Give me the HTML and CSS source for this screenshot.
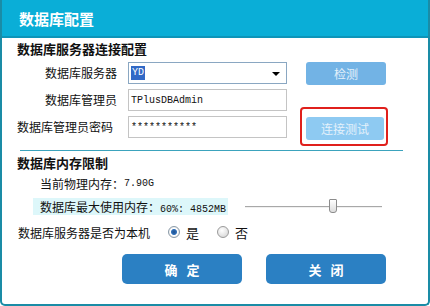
FILE: index.html
```html
<!DOCTYPE html>
<html lang="zh-CN">
<head>
<meta charset="utf-8">
<title>数据库配置</title>
<link rel="stylesheet" href="styles.css">
</head>
<body>
<div class="window">
  <div class="titlebar">数据库配置</div>
  <div class="content">
    <div class="section-title">数据库服务器连接配置</div>
    <div class="form-grid">
      <div class="label">数据库服务器</div>
      <div class="select"><span class="sel-text">YD</span><span class="arrow"></span></div>
      <button class="btn-light">检测</button>

      <div class="label">数据库管理员</div>
      <div class="input"><span class="mono">TPlusDBAdmin</span></div>
      <div></div>

      <div class="label label-long">数据库管理员密码</div>
      <div class="input"><span class="mono">***********</span></div>
      <button class="btn-light btn-test">连接测试</button>
    </div>
    <div class="divider"></div>
    <div class="section-title section-two">数据库内存限制</div>
    <div class="mem-row">当前物理内存：<span class="mono">7.90G</span></div>
    <div class="mem-row">
      <span class="mem-hl">数据库最大使用内存：<span class="mono">60%: 4852MB</span></span>
      <div class="slider"><div class="track"></div><div class="thumb"></div></div>
    </div>
    <div class="radio-row">
      <span>数据库服务器是否为本机</span>
      <span class="radio checked"></span><span class="radio-text">是</span>
      <span class="radio"></span><span class="radio-text">否</span>
    </div>
    <div class="actions">
      <button class="btn-dark">确&nbsp;&nbsp;&nbsp;定</button>
      <button class="btn-dark">关&nbsp;&nbsp;&nbsp;闭</button>
    </div>
  </div>
</div>
</body>
</html>
```

FILE: styles.css
```css
html, body {
  margin: 0;
  padding: 0;
  background: #ffffff;
}
body {
  width: 430px;
  height: 306px;
  font-family: "Noto Sans CJK SC", "DejaVu Sans", sans-serif;
  font-size: 12px;
  color: #111;
}
.window {
  box-sizing: border-box;
  width: 430px;
  height: 306px;
  border: 2px solid #1a8ca6;
  border-top: none;
  border-radius: 0 0 5px 5px;
  display: flex;
  flex-direction: column;
  overflow: hidden;
}
.titlebar {
  height: 36px;
  background: #0aaed7;
  border-bottom: 2px solid #0d95b9;
  color: #fff;
  font-weight: bold;
  font-size: 15px;
  display: flex;
  align-items: center;
  margin: 0 -2px;
  padding-left: 17px;
  border-left: 2px solid #1a8ca6;
  border-right: 2px solid #1a8ca6;
}
.content {
  padding: 2px 0 0 15px;
  display: flex;
  flex-direction: column;
}
.section-title {
  font-weight: bold;
  font-size: 13px;
  line-height: 18px;
  height: 18px;
}
.form-grid {
  margin-top: 4px;
  display: grid;
  grid-template-columns: 100px 159px 99px;
  grid-auto-rows: 22px;
  column-gap: 11px;
  row-gap: 5px;
}
.label {
  text-align: right;
  line-height: 22px;
  white-space: nowrap;
}
.label-long {
  margin-right: 4px;
  margin-left: -10px;
}
.select, .input {
  box-sizing: border-box;
  height: 22px;
  border: 1px solid #c4c4c4;
  background: #fff;
  display: flex;
  align-items: center;
  padding-left: 2px;
  position: relative;
}
.select {
  border-color: #8aa7c2;
}
.mono {
  font-family: "Liberation Mono", "DejaVu Sans Mono", monospace;
  font-size: 10px;
}
.sel-text {
  font-family: "Liberation Mono", monospace;
  font-size: 10px;
  background: #3169c6;
  color: #fff;
  padding: 1px 1px;
  line-height: 12px;
}
.arrow {
  position: absolute;
  right: 6px;
  top: 9px;
  width: 0;
  height: 0;
  border-left: 4px solid transparent;
  border-right: 4px solid transparent;
  border-top: 4px solid #000;
}
.btn-light {
  margin-left: 8px;
  width: 80px;
  height: 23px;
  border: none;
  border-radius: 3px;
  background: #72b3e5;
  color: #e4f1fb;
  font-family: "Noto Sans CJK SC", sans-serif;
  font-size: 12px;
  padding: 0;
}
.btn-test {
  width: 78px;
  margin-top: 1px;
  background: #8ecaf2;
  position: relative;
}
.btn-test::after {
  content: "";
  position: absolute;
  left: -6px;
  top: -10px;
  right: -4px;
  bottom: -6px;
  border: 2px solid #e0201c;
  border-radius: 4px;
}
.divider {
  margin-top: 12px;
  margin-left: 3px;
  width: 383px;
  height: 1px;
  background: #3ba3bd;
}
.section-two {
  margin-top: 3px;
}
.mem-row {
  height: 22px;
  line-height: 22px;
  padding-left: 23px;
  display: flex;
  align-items: center;
  white-space: nowrap;
}
.section-two + .mem-row {
  margin-top: 1px;
}
.mem-hl {
  background: #ddf7fa;
  height: 17px;
  line-height: 17px;
  margin-left: -7px;
  padding-left: 7px;
  width: 188px;
}
.slider {
  position: relative;
  margin-left: 17px;
  width: 137px;
  height: 16px;
}
.track {
  position: absolute;
  left: 0;
  right: 0;
  top: 8px;
  height: 1px;
  background: #a8a8a8;
  border-bottom: 1px solid #f0f0f0;
}
.thumb {
  position: absolute;
  left: 84px;
  top: 1px;
  width: 6px;
  height: 12px;
  border: 1px solid #8c8c8c;
  background: linear-gradient(#ffffff, #dcdcdc);
  border-radius: 1px 1px 3px 3px;
}
.radio-row {
  margin-top: 4px;
  height: 22px;
  display: flex;
  align-items: center;
  padding-left: 1px;
  font-size: 12px;
  white-space: nowrap;
}
.radio {
  box-sizing: border-box;
  width: 12px;
  height: 12px;
  border-radius: 50%;
  border: 1px solid #9a9a9a;
  background: radial-gradient(circle at 40% 35%, #ffffff, #d0d0d0);
  margin-left: 18px;
}
.radio.checked {
  background: radial-gradient(circle at 50% 50%, #1f4f8c 0, #2f6fb8 2.5px, #ffffff 3.5px, #e0e0e0 6px);
  border-color: #8a9aa8;
}
.radio-text {
  margin-left: 6px;
  font-size: 13px;
}
.actions {
  margin-top: 11px;
  padding-left: 105px;
  display: flex;
  gap: 24px;
}
.btn-dark {
  width: 120px;
  height: 30px;
  border: none;
  border-radius: 5px;
  background: #2b80c3;
  color: #fff;
  font-family: "Noto Sans CJK SC", sans-serif;
  font-weight: bold;
  font-size: 13px;
  padding: 0;
}
```
